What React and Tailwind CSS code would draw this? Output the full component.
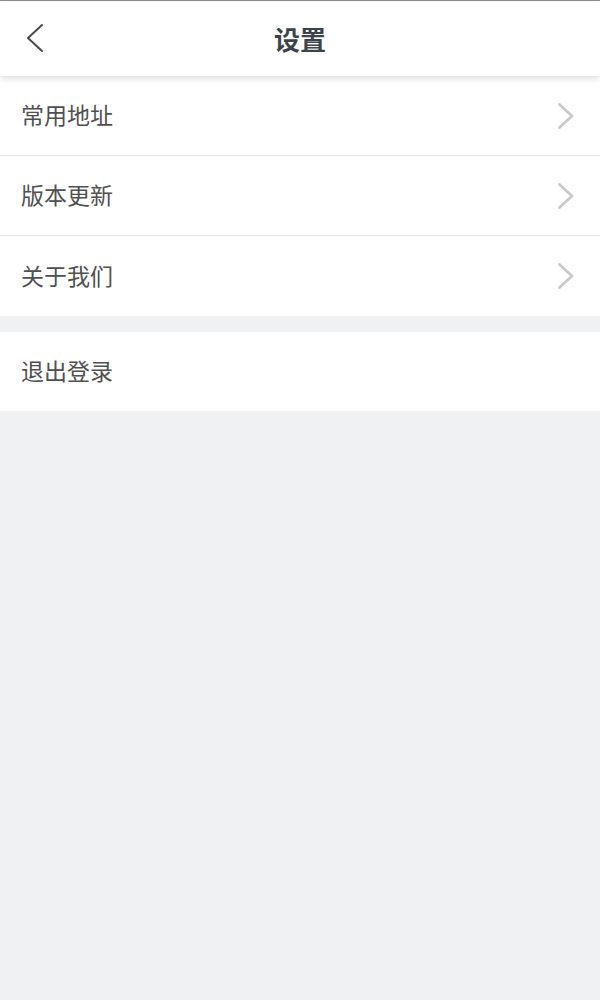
import React from 'react';

const items = ['常用地址', '版本更新', '关于我们'];

const Chevron = () => (
  <svg width="18" height="28" viewBox="0 0 18 28" fill="none" className="mr-[25px]">
    <path d="M2.5 2.5 L15 14 L2.5 25.5" stroke="#c9c9c9" strokeWidth="2.8" strokeLinecap="round" strokeLinejoin="round" />
  </svg>
);

export default function App() {
  return (
    <div
      className="min-h-[1000px] bg-[#f0f1f3] border-t border-[#8a8a8a]"
      style={{ fontFamily: '"Noto Sans CJK SC", "Noto Sans", sans-serif' }}
    >
      <header className="relative z-10 h-[75px] bg-white flex items-center justify-center shadow-[0_3px_6px_rgba(0,0,0,0.12)]">
        <button className="absolute left-[24px] top-[21px]">
          <svg width="22" height="32" viewBox="0 0 22 32" fill="none">
            <path d="M18 3 L4 16 L18 29" stroke="#4a4a4a" strokeWidth="2" strokeLinecap="round" strokeLinejoin="round" />
          </svg>
        </button>
        <h1 className="text-[26px] font-bold text-[#3d434a] leading-none">设置</h1>
      </header>

      <div className="bg-white">
        {items.map((label, i) => (
          <div
            key={label}
            className={`h-[80px] flex items-center justify-between pl-[21px] ${i < items.length - 1 ? 'border-b border-[#e6e6e6]' : ''}`}
          >
            <span className="text-[23px] text-[#505050] -mt-[2px]">{label}</span>
            <Chevron />
          </div>
        ))}
      </div>

      <div className="mt-[16px] bg-white h-[79px] flex items-center pl-[21px]">
        <span className="text-[23px] text-[#505050] -mt-[2px]">退出登录</span>
      </div>
    </div>
  );
}
